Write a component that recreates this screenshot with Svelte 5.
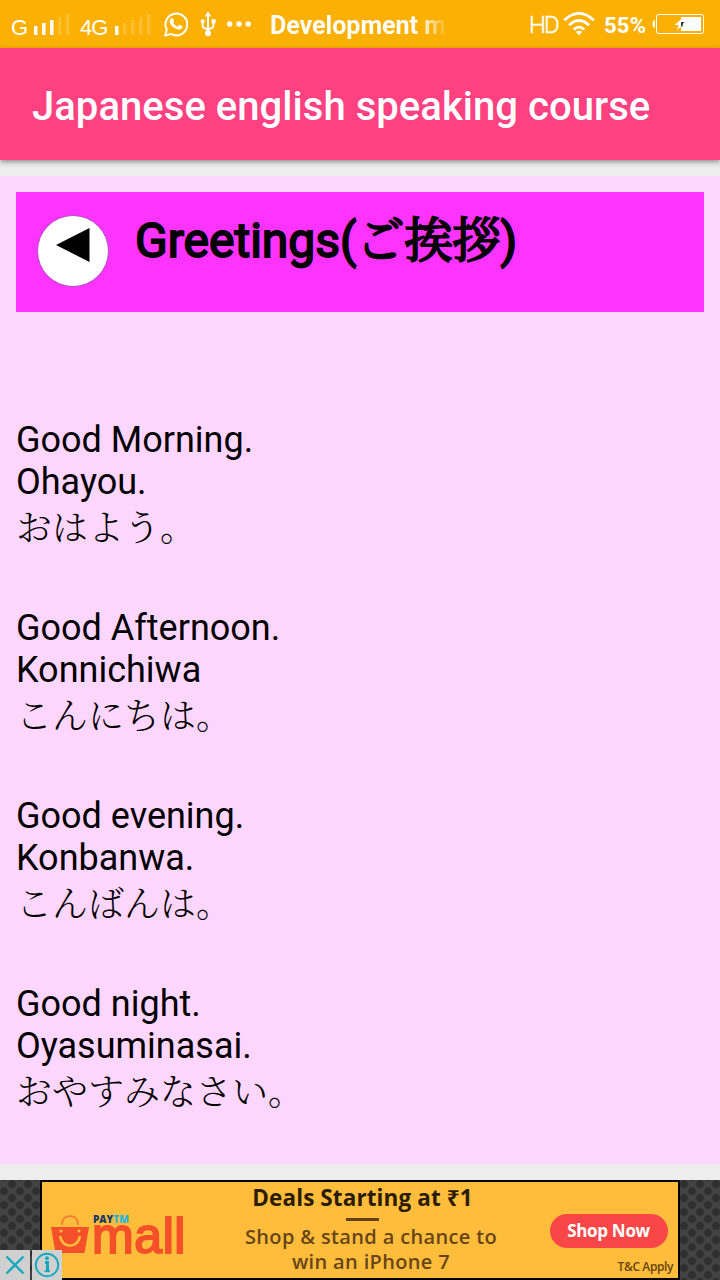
<script lang="ts">
	const phrases: { en: string; romaji: string; ja: string }[] = [
		{ en: 'Good Morning.', romaji: 'Ohayou.', ja: 'おはよう。' },
		{ en: 'Good Afternoon.', romaji: 'Konnichiwa', ja: 'こんにちは。' },
		{ en: 'Good evening.', romaji: 'Konbanwa.', ja: 'こんばんは。' },
		{ en: 'Good night.', romaji: 'Oyasuminasai.', ja: 'おやすみなさい。' }
	];

	const bars = [0, 1, 2, 3, 4];
</script>

{#snippet signal(level: number)}
	<svg class="signal" width="38" height="24" viewBox="0 0 38 24" aria-hidden="true">
		{#each bars as i}
			<rect
				x={i * 8}
				y={13 - i * 3}
				width="3.5"
				height={9 + i * 3}
				fill="#fff"
				opacity={i < level ? 1 : 0.18}
			/>
		{/each}
	</svg>
{/snippet}

<div class="screen">
	<header class="status">
		<div class="status-left">
			<span class="net g">G</span>
			{@render signal(3)}
			<span class="net lte">4G</span>
			{@render signal(1)}
			<svg class="whatsapp" width="24" height="25" viewBox="0 0 24 25" fill="none" aria-hidden="true">
				<path
					d="M1.200 23.600l1.600-6A10.900 10.900 0 1 1 7 21.900z"
					stroke="#fff"
					stroke-width="2"
					stroke-linejoin="round"
				/>
				<path
					d="M7.500 6.200c.7-.4 1.200-.3 1.500.3l1 2.300c.2.6-.2 1-.9 1.800 1.100 2 2.400 3.200 4.400 4.100l1.300-1.500c.3-.4.6-.4 1-.2l2.200 1.100c.6.3.5.9.2 1.700-.7 1.500-2.600 2.100-4.200 1.600-4.300-1.200-7.200-4-8.300-7-.4-1.500.4-3.400 1.800-4.200z"
					fill="#fff"
				/>
			</svg>
			<svg class="usb" width="16" height="26" viewBox="0 0 16 26" fill="none" aria-hidden="true">
				<path d="M8 3v20M2.500 11v3.500c0 1.500.8 2.300 2.200 2.800L8 18.500l3.300-1.200c1.400-.5 2.200-1.300 2.200-2.800V11" stroke="#fff" stroke-width="2" />
				<path d="M8 .3l3.200 5.200H4.800z" fill="#fff" />
				<circle cx="2.600" cy="10.300" r="2" fill="#fff" />
				<rect x="11.600" y="8.300" width="4" height="4" fill="#fff" />
				<circle cx="8" cy="22.300" r="3" fill="#fff" />
			</svg>
			<svg class="dots" width="24" height="6" viewBox="0 0 24 6" fill="#fff" aria-hidden="true">
				<circle cx="2.700" cy="3" r="2.700" />
				<circle cx="12" cy="3" r="2.700" />
				<circle cx="21.200" cy="3" r="2.700" />
			</svg>
			<span class="ticker">Development m</span>
		</div>
		<div class="status-right">
			<span class="hd">HD</span>
			<svg class="wifi" width="32" height="24" viewBox="0 0 32 24" fill="none" aria-hidden="true">
				<path
					d="M1.200 8.300Q16-5.500 30.800 8.300M6 13.200Q16 3.800 26 13.200M10.700 17.500Q16 12.800 21.300 17.500"
					stroke="#fff"
					stroke-width="2.800"
				/>
				<path d="M12.900 20q3.100-2.600 6.200 0L16 23.300z" fill="#fff" />
			</svg>
			<span class="percent">55%</span>
			<svg class="battery" width="53" height="20" viewBox="0 0 53 20" fill="none" aria-hidden="true">
				<path d="M3 6v8C1 13.500.5 12 .5 10S1 6.500 3 6z" fill="#fff" />
				<rect x="4.500" y=".5" width="47" height="19" rx="2" stroke="#fff" />
				<path d="M29 3h20v14H29z" fill="#fff" />
				<path d="M30 4.500L22.500 11h4l-1.500 5 6-5V4.500z" fill="#fff" />
				<path d="M29 8h3.500l-1.500 1.500-.5 3H29z" fill="#333" />
			</svg>
		</div>
	</header>

	<div class="appbar">
		<h1>Japanese english speaking course</h1>
	</div>

	<main class="page">
		<div class="lesson">
			<button class="back" type="button" aria-label="Back">
				<svg width="34" height="34" viewBox="0 0 34 34" aria-hidden="true">
					<path d="M0 17L33.500 0v34z" fill="#000" />
				</svg>
			</button>
			<h2>Greetings(<span class="kanji" lang="ja">ご挨拶</span>)</h2>
		</div>

		<div class="phrases">
			{#each phrases as p}
				<div class="phrase">
					<p>{p.en}</p>
					<p>{p.romaji}</p>
					<p class="ja" lang="ja">{p.ja}</p>
				</div>
			{/each}
		</div>
	</main>

	<aside class="ad">
		<div class="banner">
			<div class="logo">
				<svg class="bag" width="38" height="38" viewBox="0 0 38 38" fill="none" aria-hidden="true">
					<path d="M11 10C11 4 14 1.200 19 1.200S27 4 27 10" stroke="#f47b32" stroke-width="1.700" />
					<path d="M0 12h38l-4.500 26h-29z" fill="#f4502a" />
					<path d="M9 21c2 13 18 13 20 0" stroke="#ffbd3b" stroke-width="2.600" />
					<circle cx="10" cy="16" r="1.600" fill="#ffbd3b" />
					<circle cx="28" cy="16" r="1.600" fill="#ffbd3b" />
				</svg>
				<div class="brand">
					<span class="paytm">PAY<b>TM</b></span>
					<span class="mall">mall</span>
				</div>
			</div>
			<div class="offer">
				<p class="deal">Deals Starting at ₹1</p>
				<hr />
				<p class="pitch">Shop &amp; stand a chance to<br />win an iPhone 7</p>
			</div>
			<div class="cta">
				<button class="shop" type="button">Shop Now</button>
				<span class="terms">T&amp;C Apply</span>
			</div>
		</div>
		<div class="choices">
			<svg width="30" height="30" viewBox="0 0 30 30" fill="none" aria-hidden="true">
				<path d="M6.500 6.500l17 17M23.500 6.500l-17 17" stroke="#16a9bd" stroke-width="2.400" />
			</svg>
			<svg width="30" height="30" viewBox="0 0 30 30" fill="none" aria-hidden="true">
				<circle cx="15" cy="15" r="11.200" stroke="#16a9bd" stroke-width="1.900" />
				<path d="M13 12.500h2.500v9" stroke="#16a9bd" stroke-width="3" />
				<path d="M12.500 21.200h5.500" stroke="#16a9bd" stroke-width="1.800" />
				<circle cx="15" cy="8.200" r="2" fill="#16a9bd" />
			</svg>
		</div>
	</aside>
</div>

<style>
	:global(body) {
		margin: 0;
	}

	.screen {
		display: flex;
		flex-direction: column;
		width: 720px;
		height: 1280px;
		overflow: hidden;
		background: #ededed;
		font-family: Roboto, 'Noto Sans CJK JP', sans-serif;
		color: #000;
	}

	h1,
	h2,
	p {
		margin: 0;
	}

	svg {
		display: block;
		flex: none;
	}

	/* status bar */
	.status {
		display: flex;
		flex: none;
		justify-content: space-between;
		box-sizing: border-box;
		height: 48px;
		padding: 0 15px 0 11px;
		background: #fbb003;
		color: #fff;
		white-space: nowrap;
	}

	.status-left,
	.status-right {
		display: flex;
		align-items: flex-start;
	}

	.net {
		margin-top: 15px;
		font: 22px/26px 'Liberation Sans', sans-serif;
	}

	.g {
		width: 23px;
	}

	.lte {
		width: 35px;
		margin-left: 8px;
		letter-spacing: -1px;
	}

	.signal {
		margin-top: 13px;
	}

	.whatsapp {
		margin: 12px 0 0 11px;
	}

	.usb {
		margin: 11px 0 0 12px;
	}

	.dots {
		margin: 21px 0 0 11px;
	}

	.ticker {
		width: 178px;
		margin: 11px 0 0 19px;
		overflow: hidden;
		font-size: 25px;
		line-height: 30px;
		font-weight: 700;
		-webkit-mask-image: linear-gradient(to right, #000 84%, transparent);
		mask-image: linear-gradient(to right, #000 84%, transparent);
	}

	.hd {
		width: 34px;
		margin-top: 11px;
		font-size: 24px;
		line-height: 28px;
		font-weight: 300;
		letter-spacing: -2px;
		-webkit-text-stroke: 0.4px #fff;
	}

	.wifi {
		margin-top: 12px;
	}

	.percent {
		width: 48px;
		margin: 12px 0 0 9px;
		font-size: 22px;
		line-height: 28px;
		font-weight: 700;
		letter-spacing: 0.2px;
	}

	.battery {
		margin-top: 14px;
	}

	.appbar {
		position: relative;
		display: flex;
		flex: none;
		align-items: center;
		box-sizing: border-box;
		height: 112px;
		padding: 6px 32px 0;
		background: #ff4081;
		box-shadow: 0 2px 5px rgba(0, 0, 0, 0.4);
		color: #fff;
	}

	h1 {
		font-size: 40px;
		line-height: 48px;
		font-weight: 500;
		letter-spacing: 0.04px;
		white-space: nowrap;
	}

	/* lesson page */
	.page {
		flex: none;
		box-sizing: border-box;
		height: 988px;
		margin-top: 16px;
		padding: 16px;
		background: #ffd6ff;
	}

	.lesson {
		display: flex;
		align-items: flex-start;
		box-sizing: border-box;
		height: 120px;
		padding: 23px 21px;
		background: #ff33ff;
	}

	.back {
		display: flex;
		flex: none;
		align-items: flex-start;
		justify-content: center;
		box-sizing: border-box;
		width: 72px;
		height: 72px;
		padding: 12px 0 0;
		border: 1px solid #b04fc0;
		border-radius: 50%;
		background: #fff;
	}

	h2 {
		margin: -6px 0 0 26px;
		font-size: 48px;
		line-height: 56px;
		font-weight: 400;
		-webkit-text-stroke: 1.8px #000;
		white-space: nowrap;
	}

	.kanji {
		font-family: 'Noto Serif CJK JP', 'Noto Sans CJK JP', serif;
		-webkit-text-stroke-width: 2px;
	}

	.phrases {
		display: flex;
		flex-direction: column;
		gap: 52px;
		padding-top: 107px;
		font-size: 36px;
		line-height: 42px;
	}

	.ja {
		height: 52px;
		font-family: 'Noto Serif CJK JP', 'Noto Sans CJK JP', serif;
		line-height: 46px;
		font-weight: 300;
	}

	/* ad strip */
	.ad {
		position: relative;
		display: flex;
		flex: none;
		justify-content: center;
		height: 100px;
		margin-top: 16px;
		background-color: #444;
		background-image: radial-gradient(circle, #2e2e2e 3px, transparent 5px),
			radial-gradient(circle, #2e2e2e 3px, transparent 5px);
		background-position:
			-4px 4px,
			4px 11px;
		background-size: 16px 14px;
	}

	.banner {
		display: flex;
		box-sizing: border-box;
		width: 640px;
		height: 100px;
		border: 2px solid #000;
		background: #ffbd3b;
		font-family: 'Open Sans', 'Noto Sans', sans-serif;
	}

	.logo {
		display: flex;
		width: 190px;
		padding: 33px 0 0 9px;
		box-sizing: border-box;
	}

	.brand {
		display: flex;
		flex-direction: column;
		margin-left: 3px;
	}

	.paytm {
		height: 7px;
		margin-left: 1px;
		font: 800 10px/9px 'Open Sans', sans-serif;
		color: #173b69;
	}

	.paytm b {
		font-weight: 800;
		color: #25b6dc;
	}

	.mall {
		height: 28px;
		font: 400 50px/28px 'Liberation Sans', sans-serif;
		-webkit-text-stroke: 2px #f4502a;
		letter-spacing: 0.6px;
		color: #f4502a;
	}

	.offer {
		display: flex;
		flex-direction: column;
		align-items: center;
		width: 280px;
		margin-left: -1px;
		text-align: center;
		white-space: nowrap;
	}

	.deal {
		margin: 1px 17px 0 0;
		font-size: 22.5px;
		line-height: 30px;
		font-weight: 700;
		letter-spacing: 0.1px;
		color: #2c1c05;
	}

	hr {
		width: 33px;
		height: 3px;
		margin: 5px 17px 3px 0;
		border: none;
		background: #65400f;
	}

	.pitch {
		font-size: 20px;
		line-height: 25px;
		font-weight: 600;
		letter-spacing: 0.35px;
		color: #674519;
	}

	.cta {
		display: flex;
		flex: 1;
		flex-direction: column;
		align-items: flex-end;
		padding: 32px 5px 0 0;
	}

	.shop {
		width: 118px;
		height: 34px;
		margin-right: 5px;
		padding: 0 1px 1px 0;
		border: none;
		border-radius: 17px;
		background: #f94747;
		color: #fff;
		font: 700 17px/32px 'Open Sans', sans-serif;
		letter-spacing: -0.3px;
		white-space: nowrap;
	}

	.terms {
		margin-top: 11px;
		font-size: 12px;
		line-height: 16px;
		font-weight: 600;
		letter-spacing: -0.4px;
		color: #67450f;
	}

	/* ad choices sit over the banner corner */
	.choices {
		position: absolute;
		left: 0;
		bottom: 0;
		display: flex;
		gap: 2px;
	}

	.choices svg {
		background: #d0d0d0;
	}
</style>
